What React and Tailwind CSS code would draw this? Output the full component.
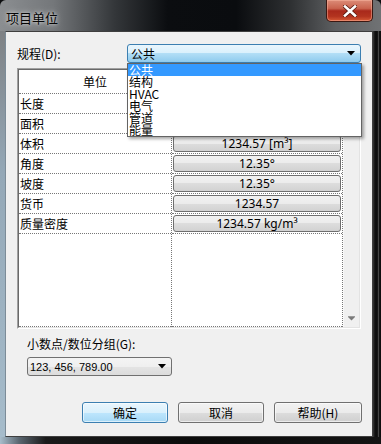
import React from "react";

const rows = [
  ["长度", "1235 [mm]"],
  ["面积", "1234.57 [m²]"],
  ["体积", "1234.57 [m³]"],
  ["角度", "12.35°"],
  ["坡度", "12.35°"],
  ["货币", "1234.57"],
  ["质量密度", "1234.57 kg/m³"],
];

const items = ["公共", "结构", "HVAC", "电气", "管道", "能量"];

function Arrow({ color = "#000" }) {
  return (
    <svg width="8" height="5" viewBox="0 0 8 5">
      <polygon points="0,0 8,0 4,4.5" fill={color} />
    </svg>
  );
}

export default function App() {
  return (
    <div className="w-[381px] h-[444px] flex flex-col overflow-hidden bg-[#0c0d0f] font-['Noto_Sans_CJK_SC','Noto_Sans',sans-serif] text-black">
      {/* title bar */}
      <div className="relative h-[31px] shrink-0 rounded-t-[6px] bg-[linear-gradient(to_right,#8b8e91_0%,#74777a_14%,#34373a_30%,#0b0d10_44%,#0a0c0f_62%,#2d2f31_76%,#5d5f61_88%,#707274_100%)]">
        <div className="pl-[6px] pt-[10px] text-[13px] leading-[16px] text-[#050505] [text-shadow:0_0_6px_rgba(225,225,225,0.9),0_0_3px_rgba(225,225,225,0.8)]">
          项目单位
        </div>
        <div className="absolute right-[8px] top-0 w-[47px] h-[22px] rounded-b-[5px] border border-t-0 border-[#3a1812] bg-[linear-gradient(to_bottom,#dc8c78_0%,#c9634e_40%,#a9291b_52%,#b3341f_78%,#d65a36_100%)] shadow-[inset_0_0_0_1px_rgba(255,190,170,0.45)] flex items-center justify-center">
          <svg width="14" height="12" viewBox="0 0 14 12">
            <path d="M2 1.5 L12 10.5 M12 1.5 L2 10.5" stroke="#5a1a10" strokeWidth="4.2" strokeLinecap="square" />
            <path d="M2 1.5 L12 10.5 M12 1.5 L2 10.5" stroke="#ffffff" strokeWidth="2.6" strokeLinecap="square" />
          </svg>
        </div>
      </div>

      {/* middle */}
      <div className="flex h-[406px] shrink-0">
        <div className="w-[5px] bg-[linear-gradient(to_bottom,#7e8184_0%,#94a8b7_35%,#a6bccb_100%)]" />
        <div className="relative w-[368px] bg-[#f0f0f0] border border-[#3f3f3f] border-l-[#7c8c98] pl-[11px] pt-[12px]">
          {/* row 1 */}
          <div className="flex items-center h-[19px]">
            <span className="w-[110px] text-[12px] leading-[14px]">规程(D):</span>
            <div className="w-[234px] h-[19px] rounded-[3px] border border-[#3c7fb1] bg-[linear-gradient(to_bottom,#eaf6fd_0%,#d9f0fc_50%,#b2def6_50%,#8fcbee_100%)] flex items-center justify-between pl-[3px] pr-[5px]">
              <span className="text-[12px] leading-[14px]">公共</span>
              <Arrow />
            </div>
          </div>

          {/* table */}
          <div className="mt-[5px] w-[344px] h-[261px] border border-[#a0a0a0] border-b-white border-r-white">
            <div className="w-full h-full border border-[#696969] border-b-[#e3e3e3] border-r-[#e3e3e3] bg-white flex">
              {/* col 1 */}
              <div className="w-[153px] flex flex-col border-r border-dotted border-[#777]">
                <div className="h-[23px] flex items-center justify-center text-[12px]">单位</div>
                {rows.map(([k]) => (
                  <div key={k} className="h-[20px] border-t border-dotted border-[#777] flex items-center pl-[1px] text-[12px] leading-[14px]">
                    {k}
                  </div>
                ))}
                <div className="flex-1 border-t border-b border-dotted border-[#777]" />
              </div>
              {/* col 2 */}
              <div className="w-[171px] flex flex-col border-r border-dotted border-[#777]">
                <div className="h-[23px] flex items-center justify-center text-[12px]">格式</div>
                {rows.map(([k, v]) => (
                  <div key={k} className="h-[20px] border-t border-dotted border-[#777] pt-[1px] px-[1px]">
                    <div className="h-[17px] rounded-[3px] border border-[#6f6f6f] bg-[linear-gradient(to_bottom,#f2f2f2_0%,#ebebeb_50%,#dddddd_50%,#d2d2d2_100%)] flex items-center justify-center text-[12px] leading-[14px] font-['Noto_Sans','Noto_Sans_CJK_SC',sans-serif]">
                      {v}
                    </div>
                  </div>
                ))}
                <div className="flex-1 border-t border-b border-dotted border-[#777]" />
              </div>
              {/* scrollbar */}
              <div className="flex-1 bg-[#f0f0f0] border-l border-[#f8f8f8] flex flex-col justify-between">
                <div className="h-[17px] flex items-center justify-center">
                  <svg width="7" height="4" viewBox="0 0 7 4">
                    <polygon points="0,4 7,4 3.5,0" fill="#8a8a8a" />
                  </svg>
                </div>
                <div className="h-[17px] flex items-center justify-center">
                  <svg width="7" height="5" viewBox="0 0 7 5">
                    <rect x="0" y="0" width="7" height="1" fill="#9a9a9a" />
                    <polygon points="0,1 7,1 3.5,4.5" fill="#7a7a7a" />
                  </svg>
                </div>
              </div>
            </div>
          </div>

          {/* decimal */}
          <div className="ml-[10px] mt-[8px] text-[12px] leading-[14px]">小数点/数位分组(G):</div>
          <div className="ml-[10px] mt-[6px] w-[145px] h-[19px] rounded-[3px] border border-[#707070] bg-[linear-gradient(to_bottom,#f4f4f4_0%,#efefef_50%,#e4e4e4_50%,#dcdcdc_100%)] flex items-center justify-between pl-[2px] pr-[5px]">
            <span className="text-[11px] leading-[14px] font-['Liberation_Sans',sans-serif]">123, 456, 789.00</span>
            <Arrow />
          </div>

          {/* buttons */}
          <div className="flex mt-[26px] ml-[65px] gap-[10px]">
            <div className="w-[86px] h-[21px] rounded-[3px] border border-[#3c7fb1] bg-[linear-gradient(to_bottom,#eaf6fd_0%,#d9f0fc_50%,#bee6fd_50%,#a7d9f5_100%)] shadow-[inset_0_0_0_1px_rgba(255,255,255,0.6)] flex items-center justify-center text-[12px] leading-[14px]">
              确定
            </div>
            <div className="w-[86px] h-[21px] rounded-[3px] border border-[#707070] bg-[linear-gradient(to_bottom,#f2f2f2_0%,#ebebeb_50%,#dddddd_50%,#cfcfcf_100%)] shadow-[inset_0_0_0_1px_rgba(255,255,255,0.6)] flex items-center justify-center text-[12px] leading-[14px]">
              取消
            </div>
            <div className="w-[88px] h-[21px] rounded-[3px] border border-[#707070] bg-[linear-gradient(to_bottom,#f2f2f2_0%,#ebebeb_50%,#dddddd_50%,#cfcfcf_100%)] shadow-[inset_0_0_0_1px_rgba(255,255,255,0.6)] flex items-center justify-center text-[12px] leading-[14px]">
              帮助(H)
            </div>
          </div>

          {/* dropdown list */}
          <div className="absolute left-[121px] top-[31px] w-[235px] border border-[#646464] bg-white shadow-[2px_2px_3px_rgba(0,0,0,0.35)]">
            {items.map((t, i) => (
              <div
                key={t}
                className={
                  i === 0
                    ? "h-[12px] leading-[12px] text-[12px] pl-[1px] bg-[#3399ff] text-white"
                    : "h-[12px] leading-[12px] text-[12px] pl-[1px] text-black"
                }
              >
                {t}
              </div>
            ))}
          </div>
        </div>
        <div className="w-[8px] bg-[linear-gradient(to_right,#3a3a3a_0%,#101010_25%,#0c0c0c_55%,#5a5a5a_65%,#151515_78%,#0c0c0c_100%)]" />
      </div>

      {/* bottom frame */}
      <div className="flex-1 bg-[linear-gradient(to_right,#a8bdcb_0%,#5a6670_5%,#1a1a1a_12%,#0b0b0b_50%,#141414_100%)]" />
    </div>
  );
}
